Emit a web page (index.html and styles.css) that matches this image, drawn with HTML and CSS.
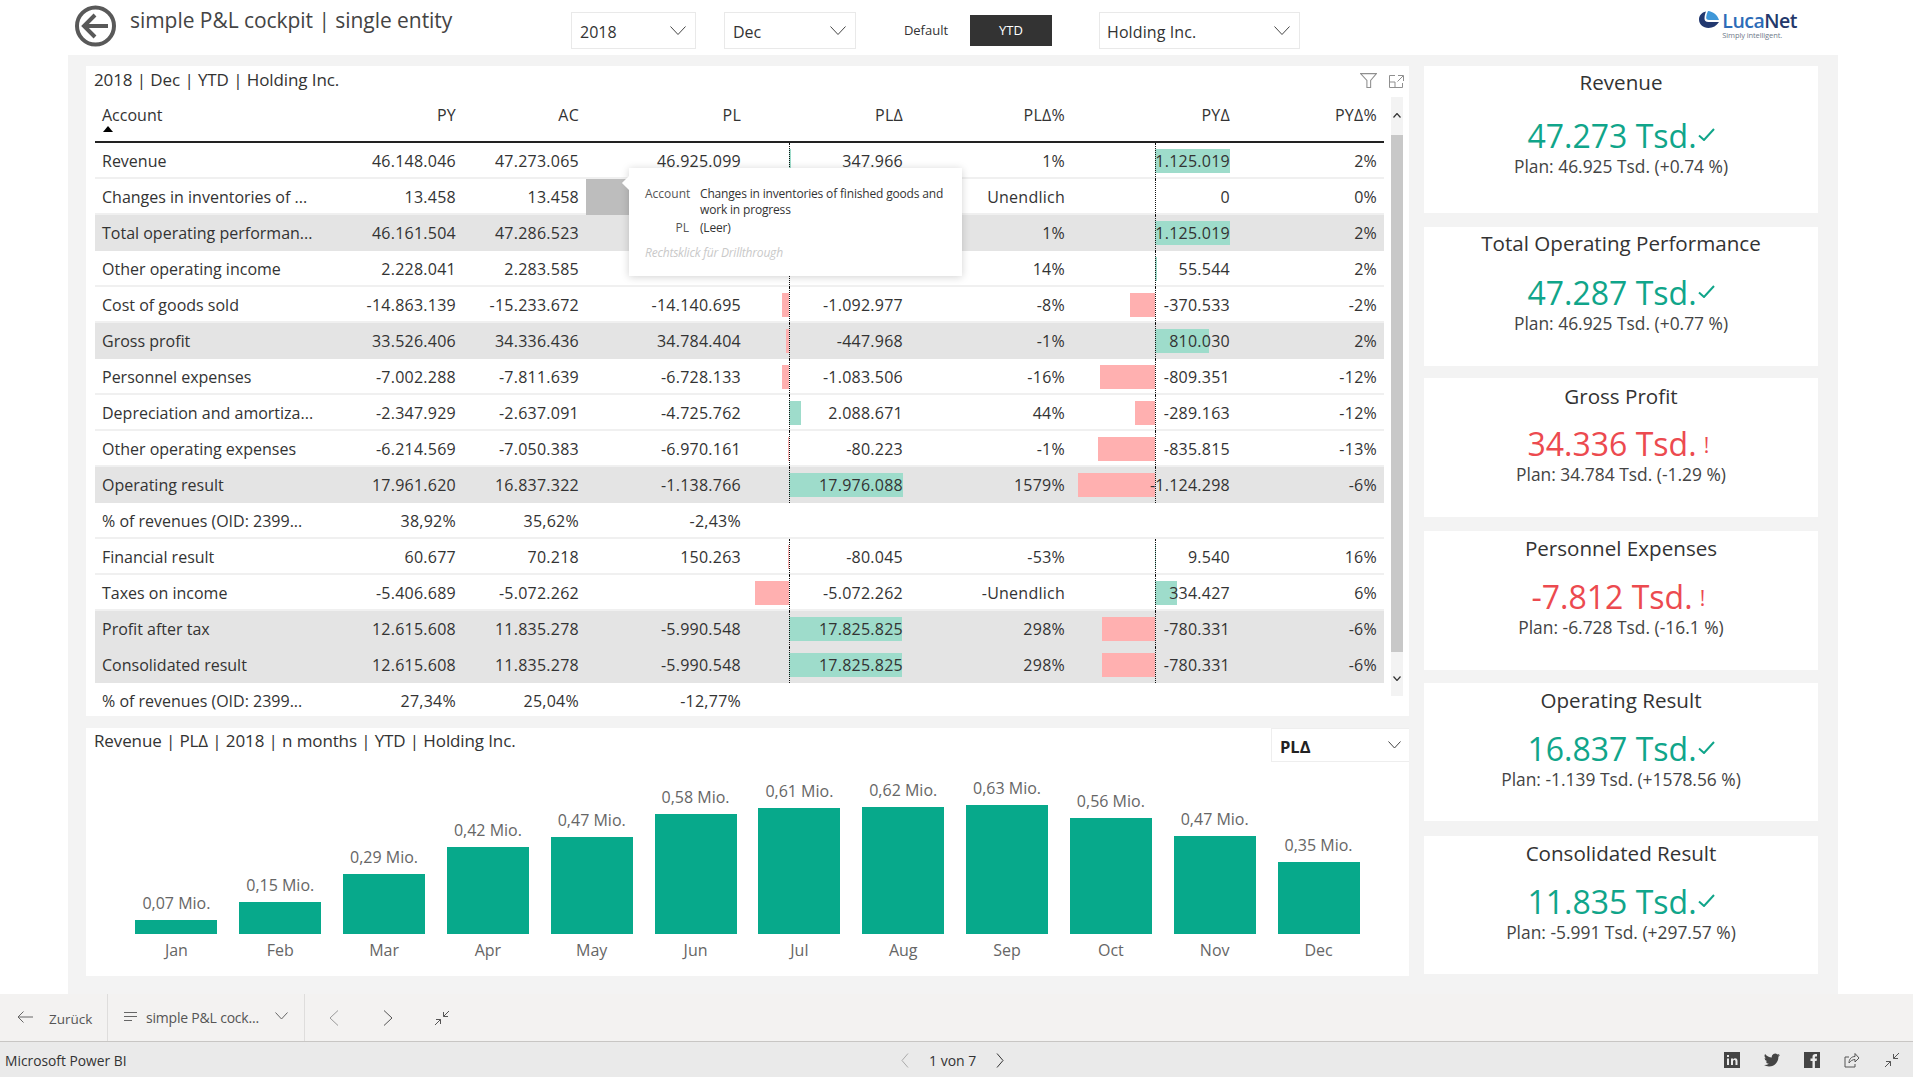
FILE: index.html
```html
<!DOCTYPE html>
<html lang="en">
<head>
<meta charset="utf-8">
<title>simple P&amp;L cockpit | single entity</title>
<link rel="stylesheet" href="styles.css">
</head>
<body>
<div class="page">
  <header class="topbar">
    <svg class="back-icon" viewBox="0 0 41 42"><circle cx="20.5" cy="21" r="18.5"/><path d="M33 21H10M20 10 9 21l11 11"/></svg>
    <h1 class="page-title">simple P&amp;L cockpit | single entity</h1>
    <div class="slicer slicer-year"><span>2018</span><svg class="chev" viewBox="0 0 16 9"><path d="M.5.5 8 8.5 15.500.5"/></svg></div>
    <div class="slicer slicer-month"><span>Dec</span><svg class="chev" viewBox="0 0 16 9"><path d="M.5.5 8 8.5 15.500.5"/></svg></div>
    <div class="toggle-off">Default</div>
    <div class="toggle-on">YTD</div>
    <div class="slicer slicer-entity"><span>Holding Inc.</span><svg class="chev" viewBox="0 0 16 9"><path d="M.5.5 8 8.5 15.500.5"/></svg></div>
    <div class="logo">
      <svg class="logo-mark" viewBox="0 0 20 17"><path d="M7 .5C2.500 1.500 0 4.500 0 8.500 0 13 4 17 9.500 17c4.500 0 8-2.300 10.500-6H9.500C6.500 11 5.500 9.500 5.500 7.500 5.500 5 6 3 7 .5z" fill="#22386f"/><path d="M9 0c5 .5 9.500 4 11 9H10C8 9 7 8 7.200 6.300 7.400 4 8 2 9 0z" fill="#3f97d8"/></svg>
      <div class="logo-text"><span class="logo-name"><span class="logo-luca">Luca</span><span class="logo-net">Net</span></span><span class="logo-tag">Simply intelligent.</span></div>
    </div>
  </header>

  <main class="stage">
    <div class="panel">
      <div class="left-col">
        <section class="table-card">
          <div class="card-head">
            <span class="card-title">2018 | Dec | YTD | Holding Inc.</span>
            <div class="card-tools">
              <svg class="tool-filter" viewBox="0 0 16 14"><path d="M.5.500h15L10 7v6.500H6.500V7z"/></svg>
              <svg class="tool-expand" viewBox="0 0 15 13"><path d="M6 .5H.5v12h13V8M.5 7h5.500v5.500M9 .5h5.500V6M14 1 8.500 6.500"/></svg>
            </div>
          </div>
          <div class="table-wrap">
            <div class="matrix">
              <div class="row head-row">
                <div class="cell first">Account<i class="sort-mark"></i></div><div class="cell c-py">PY</div><div class="cell c-ac">AC</div><div class="cell c-pl">PL</div><div class="cell c-pld">PLΔ</div><div class="cell c-plp">PLΔ%</div><div class="cell c-pyd">PYΔ</div><div class="cell c-pyp">PYΔ%</div>
              </div>

              <div class="row">
                <div class="cell first">Revenue</div><div class="cell c-py">46.148.046</div><div class="cell c-ac">47.273.065</div><div class="cell c-pl">46.925.099</div>
                <div class="cell c-pld zero"><i class="bar pos" style="width:2px"></i><span>347.966</span></div><div class="cell c-plp">1%</div>
                <div class="cell c-pyd zero"><i class="bar pos" style="width:75px"></i><span>1.125.019</span></div><div class="cell c-pyp">2%</div>
              </div>
              <div class="row">
                <div class="cell first">Changes in inventories of ...</div><div class="cell c-py">13.458</div><div class="cell c-ac">13.458</div><div class="cell c-pl hovered"></div>
                <div class="cell c-pld zero"></div><div class="cell c-plp">Unendlich</div>
                <div class="cell c-pyd zero"><span>0</span></div><div class="cell c-pyp">0%</div>
              </div>
              <div class="row total">
                <div class="cell first">Total operating performan...</div><div class="cell c-py">46.161.504</div><div class="cell c-ac">47.286.523</div><div class="cell c-pl"></div>
                <div class="cell c-pld zero"></div><div class="cell c-plp">1%</div>
                <div class="cell c-pyd zero"><i class="bar pos" style="width:75px"></i><span>1.125.019</span></div><div class="cell c-pyp">2%</div>
              </div>
              <div class="row">
                <div class="cell first">Other operating income</div><div class="cell c-py">2.228.041</div><div class="cell c-ac">2.283.585</div><div class="cell c-pl"></div>
                <div class="cell c-pld zero"></div><div class="cell c-plp">14%</div>
                <div class="cell c-pyd zero"><i class="bar pos" style="width:2px"></i><span>55.544</span></div><div class="cell c-pyp">2%</div>
              </div>
              <div class="row">
                <div class="cell first">Cost of goods sold</div><div class="cell c-py">-14.863.139</div><div class="cell c-ac">-15.233.672</div><div class="cell c-pl">-14.140.695</div>
                <div class="cell c-pld zero"><i class="bar neg" style="width:7px"></i><span>-1.092.977</span></div><div class="cell c-plp">-8%</div>
                <div class="cell c-pyd zero"><i class="bar neg" style="width:25px"></i><span>-370.533</span></div><div class="cell c-pyp">-2%</div>
              </div>
              <div class="row total">
                <div class="cell first">Gross profit</div><div class="cell c-py">33.526.406</div><div class="cell c-ac">34.336.436</div><div class="cell c-pl">34.784.404</div>
                <div class="cell c-pld zero"><i class="bar neg" style="width:3px"></i><span>-447.968</span></div><div class="cell c-plp">-1%</div>
                <div class="cell c-pyd zero"><i class="bar pos" style="width:54px"></i><span>810.030</span></div><div class="cell c-pyp">2%</div>
              </div>
              <div class="row">
                <div class="cell first">Personnel expenses</div><div class="cell c-py">-7.002.288</div><div class="cell c-ac">-7.811.639</div><div class="cell c-pl">-6.728.133</div>
                <div class="cell c-pld zero"><i class="bar neg" style="width:7px"></i><span>-1.083.506</span></div><div class="cell c-plp">-16%</div>
                <div class="cell c-pyd zero"><i class="bar neg" style="width:55px"></i><span>-809.351</span></div><div class="cell c-pyp">-12%</div>
              </div>
              <div class="row">
                <div class="cell first">Depreciation and amortiza...</div><div class="cell c-py">-2.347.929</div><div class="cell c-ac">-2.637.091</div><div class="cell c-pl">-4.725.762</div>
                <div class="cell c-pld zero"><i class="bar pos" style="width:12px"></i><span>2.088.671</span></div><div class="cell c-plp">44%</div>
                <div class="cell c-pyd zero"><i class="bar neg" style="width:20px"></i><span>-289.163</span></div><div class="cell c-pyp">-12%</div>
              </div>
              <div class="row">
                <div class="cell first">Other operating expenses</div><div class="cell c-py">-6.214.569</div><div class="cell c-ac">-7.050.383</div><div class="cell c-pl">-6.970.161</div>
                <div class="cell c-pld zero"><i class="bar neg" style="width:1px"></i><span>-80.223</span></div><div class="cell c-plp">-1%</div>
                <div class="cell c-pyd zero"><i class="bar neg" style="width:57px"></i><span>-835.815</span></div><div class="cell c-pyp">-13%</div>
              </div>
              <div class="row total">
                <div class="cell first">Operating result</div><div class="cell c-py">17.961.620</div><div class="cell c-ac">16.837.322</div><div class="cell c-pl">-1.138.766</div>
                <div class="cell c-pld zero"><i class="bar pos" style="width:114px"></i><span>17.976.088</span></div><div class="cell c-plp">1579%</div>
                <div class="cell c-pyd zero"><i class="bar neg" style="width:77px"></i><span>-1.124.298</span></div><div class="cell c-pyp">-6%</div>
              </div>
              <div class="row">
                <div class="cell first">% of revenues (OID: 2399...</div><div class="cell c-py">38,92%</div><div class="cell c-ac">35,62%</div><div class="cell c-pl">-2,43%</div>
                <div class="cell c-pld"></div><div class="cell c-plp"></div><div class="cell c-pyd"></div><div class="cell c-pyp"></div>
              </div>
              <div class="row">
                <div class="cell first">Financial result</div><div class="cell c-py">60.677</div><div class="cell c-ac">70.218</div><div class="cell c-pl">150.263</div>
                <div class="cell c-pld zero"><i class="bar neg" style="width:1px"></i><span>-80.045</span></div><div class="cell c-plp">-53%</div>
                <div class="cell c-pyd zero"><i class="bar pos" style="width:1px"></i><span>9.540</span></div><div class="cell c-pyp">16%</div>
              </div>
              <div class="row">
                <div class="cell first">Taxes on income</div><div class="cell c-py">-5.406.689</div><div class="cell c-ac">-5.072.262</div><div class="cell c-pl"></div>
                <div class="cell c-pld zero"><i class="bar neg" style="width:34px"></i><span>-5.072.262</span></div><div class="cell c-plp">-Unendlich</div>
                <div class="cell c-pyd zero"><i class="bar pos" style="width:22px"></i><span>334.427</span></div><div class="cell c-pyp">6%</div>
              </div>
              <div class="row total">
                <div class="cell first">Profit after tax</div><div class="cell c-py">12.615.608</div><div class="cell c-ac">11.835.278</div><div class="cell c-pl">-5.990.548</div>
                <div class="cell c-pld zero"><i class="bar pos" style="width:113px"></i><span>17.825.825</span></div><div class="cell c-plp">298%</div>
                <div class="cell c-pyd zero"><i class="bar neg" style="width:53px"></i><span>-780.331</span></div><div class="cell c-pyp">-6%</div>
              </div>
              <div class="row total">
                <div class="cell first">Consolidated result</div><div class="cell c-py">12.615.608</div><div class="cell c-ac">11.835.278</div><div class="cell c-pl">-5.990.548</div>
                <div class="cell c-pld zero"><i class="bar pos" style="width:113px"></i><span>17.825.825</span></div><div class="cell c-plp">298%</div>
                <div class="cell c-pyd zero"><i class="bar neg" style="width:53px"></i><span>-780.331</span></div><div class="cell c-pyp">-6%</div>
              </div>
              <div class="row last">
                <div class="cell first">% of revenues (OID: 2399...</div><div class="cell c-py">27,34%</div><div class="cell c-ac">25,04%</div><div class="cell c-pl">-12,77%</div>
                <div class="cell c-pld"></div><div class="cell c-plp"></div><div class="cell c-pyd"></div><div class="cell c-pyp"></div>
              </div>

              <div class="tooltip">
                <div class="tip-row"><span class="tip-key">Account</span><span class="tip-val">Changes in inventories of finished goods and work in progress</span></div>
                <div class="tip-row"><span class="tip-key">PL</span><span class="tip-val">(Leer)</span></div>
                <div class="tip-hint">Rechtsklick für Drillthrough</div>
              </div>
            </div>
            <div class="scrollbar">
              <svg class="sb-arrow" viewBox="0 0 8 5"><path d="M.5 4.500 4 .5l3.500 4"/></svg>
              <div class="sb-thumb"></div>
              <svg class="sb-arrow sb-down" viewBox="0 0 8 5"><path d="M.5.5 4 4.500 7.500.5"/></svg>
            </div>
          </div>
        </section>

        <section class="chart-card">
          <div class="chart-head">
            <span class="card-title">Revenue | PLΔ | 2018 | n months | YTD | Holding Inc.</span>
            <div class="measure-select"><b>PLΔ</b><svg class="chev-small" viewBox="0 0 13 8"><path d="M.5.5 6.500 7 12.500.5"/></svg></div>
          </div>
          <div class="chart">
            <div class="col"><span class="val">0,07 Mio.</span><i class="column" style="height:14px"></i><span class="mon">Jan</span></div>
            <div class="col"><span class="val">0,15 Mio.</span><i class="column" style="height:32px"></i><span class="mon">Feb</span></div>
            <div class="col"><span class="val">0,29 Mio.</span><i class="column" style="height:60px"></i><span class="mon">Mar</span></div>
            <div class="col"><span class="val">0,42 Mio.</span><i class="column" style="height:87px"></i><span class="mon">Apr</span></div>
            <div class="col"><span class="val">0,47 Mio.</span><i class="column" style="height:97px"></i><span class="mon">May</span></div>
            <div class="col"><span class="val">0,58 Mio.</span><i class="column" style="height:120px"></i><span class="mon">Jun</span></div>
            <div class="col"><span class="val">0,61 Mio.</span><i class="column" style="height:126px"></i><span class="mon">Jul</span></div>
            <div class="col"><span class="val">0,62 Mio.</span><i class="column" style="height:127px"></i><span class="mon">Aug</span></div>
            <div class="col"><span class="val">0,63 Mio.</span><i class="column" style="height:129px"></i><span class="mon">Sep</span></div>
            <div class="col"><span class="val">0,56 Mio.</span><i class="column" style="height:116px"></i><span class="mon">Oct</span></div>
            <div class="col"><span class="val">0,47 Mio.</span><i class="column" style="height:98px"></i><span class="mon">Nov</span></div>
            <div class="col"><span class="val">0,35 Mio.</span><i class="column" style="height:72px"></i><span class="mon">Dec</span></div>
          </div>
        </section>
      </div>

      <aside class="right-col">
        <div class="kpi"><div class="kpi-title">Revenue</div><div class="kpi-value good">47.273 Tsd.<svg class="mark" viewBox="0 0 17 13"><path d="M1 7.500 6 12 16 1"/></svg></div><div class="kpi-plan">Plan: 46.925 Tsd. (+0.74 %)</div></div>
        <div class="kpi"><div class="kpi-title">Total Operating Performance</div><div class="kpi-value good">47.287 Tsd.<svg class="mark" viewBox="0 0 17 13"><path d="M1 7.500 6 12 16 1"/></svg></div><div class="kpi-plan">Plan: 46.925 Tsd. (+0.77 %)</div></div>
        <div class="kpi"><div class="kpi-title">Gross Profit</div><div class="kpi-value bad">34.336 Tsd.<span class="alert">!</span></div><div class="kpi-plan">Plan: 34.784 Tsd. (-1.29 %)</div></div>
        <div class="kpi"><div class="kpi-title">Personnel Expenses</div><div class="kpi-value bad">-7.812 Tsd.<span class="alert">!</span></div><div class="kpi-plan">Plan: -6.728 Tsd. (-16.1 %)</div></div>
        <div class="kpi"><div class="kpi-title">Operating Result</div><div class="kpi-value good">16.837 Tsd.<svg class="mark" viewBox="0 0 17 13"><path d="M1 7.500 6 12 16 1"/></svg></div><div class="kpi-plan">Plan: -1.139 Tsd. (+1578.56 %)</div></div>
        <div class="kpi"><div class="kpi-title">Consolidated Result</div><div class="kpi-value good">11.835 Tsd.<svg class="mark" viewBox="0 0 17 13"><path d="M1 7.500 6 12 16 1"/></svg></div><div class="kpi-plan">Plan: -5.991 Tsd. (+297.57 %)</div></div>
      </aside>
    </div>
  </main>

  <nav class="toolbar">
    <div class="tb-back">
      <svg class="tb-arrow" viewBox="0 0 16 12"><path d="M16 6H1M6.500.5 1 6l5.500 5.500"/></svg>
      <span>Zurück</span>
    </div>
    <div class="tb-pages">
      <svg class="tb-lines" viewBox="0 0 13 9"><path d="M0 .5h13M0 4.500h13M0 8.500h8"/></svg>
      <span>simple P&amp;L cock...</span>
      <svg class="tb-chev" viewBox="0 0 13 8"><path d="M.5.5 6.500 7 12.500.5"/></svg>
    </div>
    <div class="tb-nav">
      <svg class="tb-prev" viewBox="0 0 10 16"><path d="M9 .5 1 8l8 7.500"/></svg>
      <svg class="tb-next" viewBox="0 0 10 16"><path d="M1 .5 9 8l-8 7.500"/></svg>
      <svg class="tb-shrink" viewBox="0 0 16 16"><path d="M15 1 9.500 6.500M9.500 2v4.500H14M1 15l5.500-5.500M2 9.500h4.500V14"/></svg>
    </div>
  </nav>

  <footer class="statusbar">
    <div class="brand">Microsoft Power BI</div>
    <div class="pager">
      <svg class="pg-prev" viewBox="0 0 8 15"><path d="M7 .5 1 7.500l6 7"/></svg>
      <span>1 von 7</span>
      <svg class="pg-next" viewBox="0 0 8 15"><path d="M1 .5 7 7.500l-6 7"/></svg>
    </div>
    <div class="share">
      <svg class="sh-icon" viewBox="0 0 16 16"><rect width="16" height="16" fill="#444"/><path d="M3 6.500h2V13H3zM3 3h2v2H3zM7 6.500h2v1c.5-.8 1.300-1.200 2.200-1.200 1.700 0 2.300 1.100 2.300 2.900V13h-2V9.500c0-.9-.3-1.500-1.100-1.500S9 8.600 9 9.500V13H7z" fill="#eaeaea"/></svg>
      <svg class="sh-icon" viewBox="0 0 24 24"><path fill="#444" d="M23.950 4.570a10 10 0 0 1-2.820.77 4.960 4.960 0 0 0 2.160-2.720 9.900 9.900 0 0 1-3.120 1.190 4.920 4.920 0 0 0-8.380 4.480A13.980 13.980 0 0 1 1.640 3.160a4.920 4.920 0 0 0 1.520 6.570 4.900 4.900 0 0 1-2.230-.61v.06a4.920 4.920 0 0 0 3.950 4.830 5 5 0 0 1-2.210.08 4.940 4.940 0 0 0 4.600 3.420A9.870 9.870 0 0 1 0 19.540a13.940 13.940 0 0 0 7.550 2.210c9.050 0 14-7.500 14-13.980 0-.21 0-.42-.01-.63a10 10 0 0 0 2.410-2.570z"/></svg>
      <svg class="sh-icon" viewBox="0 0 16 16"><rect width="16" height="16" fill="#444"/><path d="M8.500 16V9H6.500V6.500h2V4.800C8.500 2.900 9.600 2 11.300 2H13v2.500h-1.100c-.8 0-1 .4-1 1V6.500H13L12.600 9h-1.700v7z" fill="#eaeaea"/></svg>
      <svg class="sh-line" viewBox="0 0 16 16"><path d="M5 5H1v10h10v-3M5 11c0-4 2.500-6.500 6-6.500V1.500l4 4.500-4 4V7.500C8.500 7.500 6.500 9 5 11z"/></svg>
      <svg class="sh-line" viewBox="0 0 16 16"><path d="M15 1 9.500 6.500M9.500 2v4.500H14M1 15l5.500-5.500M2 9.500h4.500V14"/></svg>
    </div>
  </footer>
</div>
</body>
</html>
```
FILE: styles.css
```css
* { box-sizing: border-box; }
html, body { margin: 0; padding: 0; background: #fff; }
body { font-family: "Open Sans", "Noto Sans", sans-serif; color: #333; }
.page { width: 1913px; height: 1077px; display: flex; flex-direction: column; overflow: hidden; }

/* Top bar */
.topbar { height: 55px; display: flex; align-items: flex-start; flex: none; }
.back-icon { width: 41px; height: 42px; margin: 5px 0 0 75px; flex: none; }
.back-icon circle, .back-icon path { fill: none; stroke: #595959; stroke-width: 4; }
.page-title { margin: 2px 0 0 14px; width: 441px; font-size: 21px; line-height: 36px; font-weight: 400; color: #444; white-space: nowrap; letter-spacing: -.05px; }
.slicer { height: 37px; margin-top: 12px; border: 1px solid #e9e9e9; display: flex; align-items: center; justify-content: space-between; padding: 2px 9px 0 8px; font-size: 16px; color: #333; }
.slicer-year { width: 125px; }
.slicer-month { width: 132px; margin-left: 28px; }
.slicer-entity { width: 201px; margin-left: 47px; padding-left: 7px; letter-spacing: .1px; }
.chev { width: 16px; height: 9px; margin-top: -3px; }
.chev path, .chev-small path, .tb-chev path { fill: none; stroke: #444; stroke-width: 1; }
.toggle-off { width: 114px; margin-top: 15px; padding-left: 26px; line-height: 31px; text-align: center; font-size: 13px; color: #333; }
.toggle-on { width: 82px; margin-top: 15px; line-height: 31px; text-align: center; font-size: 13px; color: #fff; background: #333; }
.logo { margin: 11px 116px 0 auto; display: flex; gap: 3px; align-items: flex-start; }
.logo-mark { width: 20px; height: 17px; }
.logo-text { display: flex; flex-direction: column; align-items: flex-start; }
.logo-name { font-size: 19.500px; line-height: 20px; font-weight: 600; letter-spacing: -.5px; }
.logo-luca { color: #2c6cb8; }
.logo-net { color: #24386b; }
.logo-tag { font-size: 7.500px; line-height: 9px; color: #6f7a8a; letter-spacing: -.1px; }

/* Stage */
.stage { flex: none; height: 939px; padding-left: 68px; }
.panel { width: 1770px; height: 939px; background: #f3f3f3; padding: 11px 0 0 18px; display: flex; gap: 15px; }
.left-col { width: 1323px; display: flex; flex-direction: column; gap: 12px; }
.right-col { width: 394px; }

/* Table card */
.table-card { height: 650px; background: #fff; padding-left: 9px; overflow: hidden; }
.card-head { height: 31px; display: flex; justify-content: space-between; }
.card-title { font-size: 17px; line-height: 28px; color: #333; margin-left: -1px; letter-spacing: -.1px; }
.chart-head .card-title { line-height: 26px; letter-spacing: -.12px; }
.card-tools { display: flex; gap: 12px; margin: 7px 5px 0 0; align-items: flex-start; }
.tool-filter { width: 17px; height: 15px; }
.tool-expand { width: 15px; height: 13px; margin-top: 2px; }
.tool-filter path, .tool-expand path { fill: none; stroke: #8f8f8f; stroke-width: 1; }
.table-wrap { display: flex; gap: 7px; align-items: flex-start; }
.matrix { position: relative; width: 1289px; flex: none; }
.row { display: grid; grid-template-columns: 225px 143px 123px 161px 160px 164px 165px 148px; height: 36px; border-bottom: 2px solid #f0f0f0; font-size: 16px; line-height: 36px; }
.row.total { background: #e4e4e4; border-bottom: 0; }
.row.last { border-bottom: 0; }
.head-row { height: 46px; border-bottom: 2px solid #222; line-height: 36px; }
.cell { position: relative; text-align: right; white-space: nowrap; padding-right: 6px; letter-spacing: .25px; }
.cell.first { text-align: left; padding-left: 7px; letter-spacing: 0; }
.c-py, .c-ac, .c-pyp { padding-right: 7px; }
.c-pld { padding-right: 4px; }
.cell span { position: relative; }
.hovered { background: #bdbdbd; }
.sort-mark { position: absolute; left: 8px; top: 29px; width: 0; height: 0; border-left: 5px solid transparent; border-right: 5px solid transparent; border-bottom: 6px solid #000; }
.zero::after { content: ""; position: absolute; top: 0; bottom: -2px; border-left: 1px dotted #111; }
.c-pld.zero::after { left: 42px; }
.c-pyd.zero::after { left: 84px; }
.row.total .zero::after { bottom: 0; }
.bar { position: absolute; top: 6px; height: 24px; }
.bar.pos { background: #9edccb; }
.bar.neg { background: #ffb0b0; }
.c-pld .bar.pos { left: 42px; }
.c-pld .bar.neg { right: calc(100% - 42px); }
.c-pyd .bar.pos { left: 84px; }
.c-pyd .bar.neg { right: calc(100% - 84px); }

/* Tooltip */
.tooltip { position: absolute; left: 534px; top: 71px; width: 333px; height: 108px; background: #fff; box-shadow: 0 1px 8px rgba(0,0,0,.18); padding: 18px 12px 0 16px; z-index: 5; font-size: 12px; line-height: 16px; }
.tooltip::before { content: ""; position: absolute; left: -5px; top: 10px; width: 10px; height: 10px; background: #fff; transform: rotate(45deg); }
.tip-row { display: grid; grid-template-columns: 44px 1fr; column-gap: 11px; margin-bottom: 2px; position: relative; }
.tip-key { text-align: right; color: #555; }
.tip-val { color: #333; letter-spacing: -.17px; }
.tip-hint { margin-top: 9px; font-style: italic; color: #c9c9c9; letter-spacing: -.2px; }

/* Scrollbar */
.scrollbar { width: 12px; height: 599px; background: #f3f3f3; display: flex; flex-direction: column; align-items: center; flex: none; }
.sb-arrow { width: 8px; height: 5px; margin: 16px 0 17px; flex: none; }
.sb-arrow path { fill: none; stroke: #333; stroke-width: 1.200; }
.sb-down { margin: 24px 0 0; }
.sb-thumb { width: 12px; height: 517px; background: #c8c8c8; flex: none; }

/* Chart card */
.chart-card { height: 248px; background: #fff; display: flex; flex-direction: column; }
.chart-head { display: flex; justify-content: space-between; align-items: flex-start; padding-left: 9px; height: 34px; }
.measure-select { width: 138px; height: 34px; border: 1px solid #eee; border-width: 1px 0 1px 1px; display: flex; align-items: center; justify-content: space-between; padding: 2px 8px 0; font-size: 16.500px; color: #222; }
.chev-small { width: 13px; height: 8px; margin-top: -2px; }
.chart { margin: 0 0 0 38.500px; display: grid; grid-template-columns: repeat(12, 103.830px); height: 214px; }
.col { display: flex; flex-direction: column; align-items: center; justify-content: flex-end; }
.val { font-size: 16px; line-height: 26px; color: #666; margin-bottom: 4px; }
.column { display: block; width: 82px; background: #07a98b; flex: none; }
.mon { font-size: 16px; line-height: 32px; height: 42px; color: #666; }

/* KPI cards */
.kpi { background: #fff; text-align: center; height: 139px; }
.kpi:nth-child(1) { height: 147px; }
.kpi:nth-child(2) { margin-top: 14px; }
.kpi:nth-child(3) { margin-top: 12px; }
.kpi:nth-child(4) { margin-top: 14px; }
.kpi:nth-child(5) { margin-top: 13px; height: 138px; }
.kpi:nth-child(6) { margin-top: 15px; height: 138px; }
.kpi-title { height: 46px; line-height: 32px; font-size: 20.600px; color: #333; }
.kpi:nth-child(1) .kpi-title { height: 50px; }
.kpi:nth-child(3) .kpi-title { padding-top: 2px; }
.kpi:nth-child(n+4) .kpi-title { padding-top: 1px; }
.kpi-value { height: 39px; line-height: 39px; font-size: 32px; display: flex; justify-content: center; }
.good { color: #10a58a; }
.bad { color: #ec4a4f; }
.mark { width: 17px; height: 13px; margin: 12px 0 0 1px; flex: none; }
.mark path { fill: none; stroke: #10a58a; stroke-width: 2; }
.alert { font-size: 21px; line-height: 42px; width: 16px; margin-left: 2px; text-align: center; }
.kpi-plan { height: 22px; line-height: 22px; font-size: 17.400px; color: #444; }

/* Toolbar */
.toolbar { height: 48px; flex: none; background: #f3f2f1; border-bottom: 1px solid #c8c6c4; display: flex; font-size: 13.500px; color: #555; }
.tb-back { width: 108px; display: flex; align-items: center; padding: 3px 0 0 17px; gap: 16px; border-right: 1px solid #dedddc; }
.tb-arrow { width: 16px; height: 12px; margin-top: -4px; }
.tb-arrow path, .tb-lines path { fill: none; stroke: #666; stroke-width: 1; }
.tb-pages { width: 197px; display: flex; align-items: center; padding: 0 0 0 16px; border-right: 1px solid #dedddc; font-size: 14px; }
.tb-lines { width: 13px; height: 9px; margin: -3px 9px 0 0; }
.tb-pages span { width: 129px; white-space: nowrap; letter-spacing: -.2px; }
.tb-chev { width: 13px; height: 8px; margin-top: -3px; }
.tb-chev path { stroke: #666; }
.tb-nav { display: flex; align-items: center; padding-left: 24px; }
.tb-prev, .tb-next { width: 10px; height: 16px; }
.tb-prev path { fill: none; stroke: #999; stroke-width: 1; }
.tb-next { margin-left: 44px; }
.tb-next path, .tb-shrink path { fill: none; stroke: #555; stroke-width: 1; }
.tb-shrink { width: 16px; height: 16px; margin-left: 41px; }

/* Status bar */
.statusbar { flex: 1; background: #eaeaea; display: grid; grid-template-columns: 901px auto 1fr; align-items: center; padding-top: 1px; }
.brand { padding-left: 5px; font-size: 13.800px; color: #333; }
.pager { display: flex; align-items: center; gap: 20px; font-size: 14px; color: #333; }
.pg-prev, .pg-next { width: 8px; height: 15px; }
.pg-prev path { fill: none; stroke: #aaa; stroke-width: 1; }
.pg-next path { fill: none; stroke: #333; stroke-width: 1; }
.share { display: flex; justify-content: flex-end; gap: 24px; padding-right: 13px; align-items: center; }
.sh-icon, .sh-line { width: 16px; height: 16px; }
.sh-line path { fill: none; stroke: #555; stroke-width: 1; }
```
